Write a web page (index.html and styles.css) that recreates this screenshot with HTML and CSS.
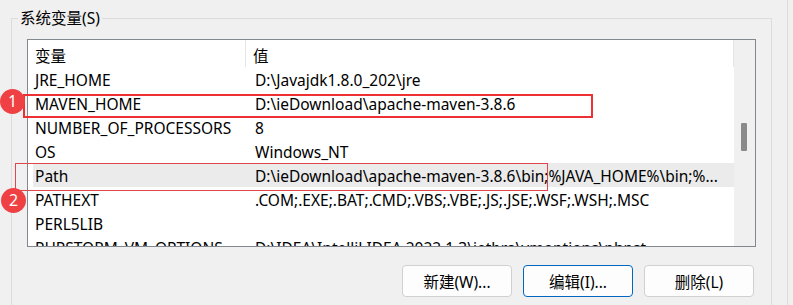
FILE: index.html
```html
<!DOCTYPE html>
<html lang="zh-CN">
<head>
    <meta charset="UTF-8">
    <title>系统变量</title>
    <link rel="stylesheet" href="styles.css">
</head>
<body>

<div class="window">
    <div class="page">
        <div class="group">
            <div class="legend">系统变量(S)</div>

            <div class="listbox">
                <div class="rows">
                    <div class="header">
                        <div class="hcell name">变量</div>
                        <div class="hcell value">值</div>
                    </div>
                    <div class="row"><span class="name">JRE_HOME</span><span class="value">D:\Javajdk1.8.0_202\jre</span></div>
                    <div class="row"><span class="name">MAVEN_HOME</span><span class="value">D:\ieDownload\apache-maven-3.8.6</span></div>
                    <div class="row"><span class="name">NUMBER_OF_PROCESSORS</span><span class="value">8</span></div>
                    <div class="row"><span class="name">OS</span><span class="value">Windows_NT</span></div>
                    <div class="row selected"><span class="name">Path</span><span class="value">D:\ieDownload\apache-maven-3.8.6\bin;%JAVA_HOME%\bin;%...</span></div>
                    <div class="row"><span class="name">PATHEXT</span><span class="value">.COM;.EXE;.BAT;.CMD;.VBS;.VBE;.JS;.JSE;.WSF;.WSH;.MSC</span></div>
                    <div class="row"><span class="name">PERL5LIB</span><span class="value"></span></div>
                    <div class="row"><span class="name">PHPSTORM_VM_OPTIONS</span><span class="value">D:\IDEA\IntelliJ IDEA 2022.1.3\jetbra\vmoptions\phpst</span></div>
                </div>
                <div class="scrollbar"><div class="thumb"></div></div>
            </div>

            <div class="buttons">
                <button class="btn">新建(W)...</button>
                <button class="btn default">编辑(I)...</button>
                <button class="btn">删除(L)</button>
            </div>
        </div>

        <!-- annotations drawn over the dialog -->
        <div class="mark mark-1"></div>
        <div class="badge badge-1">1</div>
        <div class="mark mark-2"></div>
        <div class="badge badge-2">2</div>
    </div>
    <div class="edge"></div>
</div>

</body>
</html>
```

FILE: styles.css
```css
body {
    margin: 0;
    background-color: #f0f0f0;
    font-family: "Noto Sans", "Noto Sans CJK SC", sans-serif;
    font-size: 15.5px;
    color: #000;
    overflow: hidden;
}
.window {
    display: flex;
    height: 305px;
}
.page {
    position: relative;
    width: 776px;
    padding: 18px 0 0 11px;
}
.group {
    width: 759px;
    height: 300px;
    border: 1px solid #dcdcdc;
    border-bottom: none;
}
.legend {
    width: fit-content;
    margin: -11px 0 0 6px;
    padding: 0 2px;
    line-height: 20px;
    background-color: #f0f0f0;
}
.listbox {
    display: flex;
    width: 727px;
    height: 206px;
    margin: 11px 0 0 15px;
    border: 1px solid #828790;
    background-color: #fff;
    overflow: hidden;
}
.rows {
    flex: 1;
}
.header {
    display: flex;
    height: 27px;
    align-items: stretch;
}
.hcell {
    padding-top: 5px;
    line-height: 22px;
}
.hcell.name {
    width: 210px;
    padding-left: 7px;
}
.hcell.value {
    flex: 1;
    padding-left: 7px;
    border-left: 1px solid #e5e5e5;
    border-right: 1px solid #e5e5e5;
}
.row {
    display: flex;
    box-sizing: border-box;
    height: 24px;
    padding-top: 2px;
    align-items: center;
    margin-left: 5px;
    white-space: nowrap;
}
.row .name {
    width: 213px;
    padding-left: 2px;
}
.row .value {
    padding-left: 7px;
}
.row.selected {
    background-color: #ebebeb;
}
.scrollbar {
    width: 21px;
    background-color: #f0f0f0;
    padding-top: 83px;
}
.thumb {
    width: 6px;
    height: 28px;
    margin-left: 7px;
    background-color: #8a8a8a;
    border-radius: 1px;
}
.buttons {
    display: flex;
    justify-content: flex-end;
    gap: 11px;
    width: 727px;
    margin: 18px 0 0 15px;
}
.btn {
    width: 110px;
    height: 32px;
    font-family: inherit;
    font-size: 15.5px;
    color: #000;
    background-color: #fdfdfd;
    border: 1px solid #d0d0d0;
    border-radius: 4px;
}
.btn.default {
    border-color: #0067c0;
}
.edge {
    flex: 1;
    border-left: 1px solid #dcdcdc;
}
.mark {
    position: absolute;
    box-sizing: border-box;
}
.mark-1 {
    left: 23px;
    top: 94px;
    width: 570px;
    height: 24px;
    border: 2px solid #ee2f34;
}
.mark-2 {
    left: 15px;
    top: 163px;
    width: 533px;
    height: 28px;
    border: 1px solid #e0474b;
}
.badge {
    position: absolute;
    width: 25px;
    height: 25px;
    border-radius: 50%;
    background-color: #ef4043;
    color: #fff;
    font-size: 16px;
    line-height: 25px;
    text-align: center;
}
.badge-1 {
    left: 0;
    top: 89px;
}
.badge-2 {
    left: 1px;
    top: 188px;
}
```
